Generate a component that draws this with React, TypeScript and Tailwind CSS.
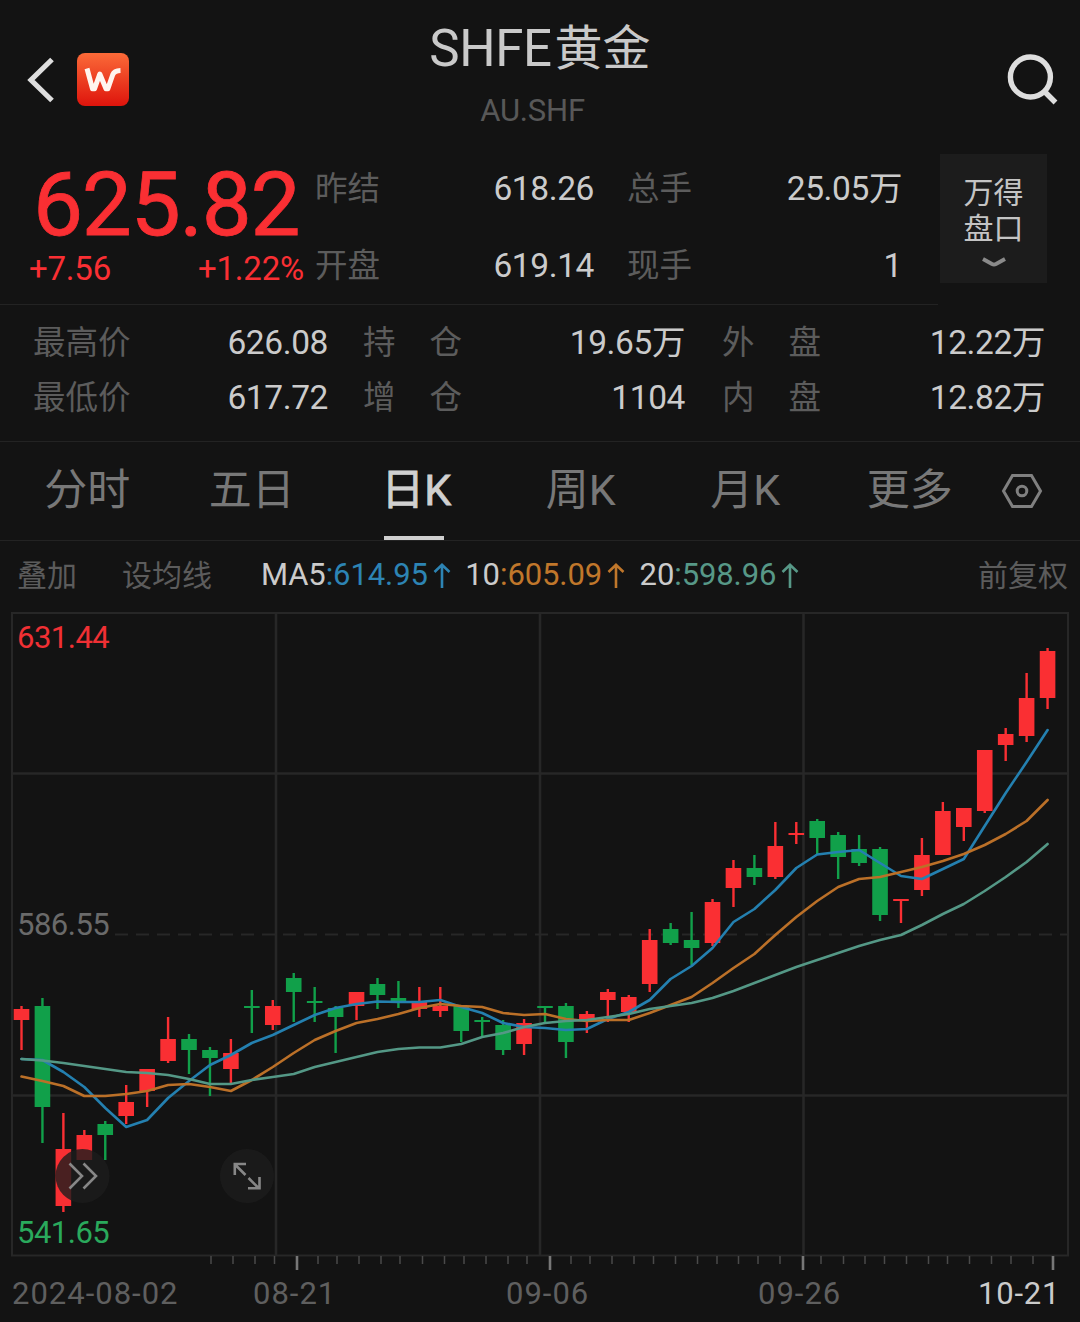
import clsx from 'clsx';

type Candle = [top: number, bottom: number, high: number, low: number, up: 0 | 1];

// y pixel coordinates inside the chart: body top, body bottom, wick top, wick bottom, up/down
const candles: Candle[] = [
  [1009, 1020, 1006, 1050, 1], [1006, 1107, 998, 1143, 0], [1149, 1206, 1113, 1212, 1],
  [1135, 1160, 1130, 1160, 1], [1124, 1135, 1121, 1160, 0], [1102, 1116, 1085, 1124, 1],
  [1069, 1091, 1069, 1107, 1], [1039, 1061, 1017, 1063, 1], [1039, 1050, 1034, 1074, 0],
  [1050, 1058, 1047, 1096, 0], [1053, 1069, 1039, 1084, 1], [1006, 1008, 990, 1033, 0],
  [1006, 1025, 1000, 1030, 1], [978, 992, 973, 1022, 0], [1001, 1003, 987, 1022, 0],
  [1008, 1017, 1006, 1053, 0], [992, 1006, 992, 1020, 1], [984, 995, 978, 1009, 0],
  [998, 1001, 981, 1008, 0], [1001, 1009, 987, 1017, 1], [1006, 1011, 987, 1017, 1],
  [1006, 1031, 1006, 1042, 0], [1020, 1022, 1017, 1037, 0], [1025, 1050, 1020, 1055, 0],
  [1023, 1044, 1019, 1055, 1], [1006, 1008, 1006, 1024, 0], [1006, 1042, 1003, 1058, 0],
  [1014, 1021, 1011, 1033, 1], [992, 1000, 989, 1022, 1], [997, 1012, 995, 1022, 1],
  [940, 984, 929, 992, 1], [929, 943, 923, 945, 0], [940, 948, 912, 965, 0],
  [902, 943, 899, 946, 1], [868, 888, 860, 907, 1], [868, 877, 855, 885, 0],
  [846, 877, 822, 879, 1], [833, 835, 822, 844, 1], [821, 838, 819, 854, 0],
  [835, 857, 832, 879, 0], [849, 863, 835, 866, 0], [849, 915, 847, 921, 0],
  [899, 901, 899, 923, 1], [855, 890, 838, 896, 1], [811, 855, 802, 855, 1],
  [808, 827, 808, 841, 1], [750, 811, 750, 813, 1], [734, 745, 728, 761, 1],
  [698, 736, 673, 742, 1], [651, 698, 648, 709, 1],
];

const ma5 = [
  1059, 1060, 1072, 1087, 1108, 1127, 1120, 1098, 1081, 1065, 1055, 1043, 1035, 1025, 1015, 1008, 1004,
  1001.5, 1002, 1002, 1000, 1007, 1013, 1023, 1027, 1028, 1030, 1029, 1019, 1012, 1000, 979, 966, 948,
  922, 909, 890, 868, 854.5, 852, 850, 863, 876, 879, 869, 859, 826, 793, 762, 730,
];
const ma10 = [
  1076.5, 1081, 1086, 1096, 1096, 1094, 1091, 1085, 1084, 1087, 1091, 1080, 1067, 1053, 1040, 1031, 1023,
  1019, 1014, 1008, 1004, 1006, 1007, 1013, 1015, 1014, 1019, 1021, 1020, 1020, 1013, 1005, 997, 983,
  968, 954, 935, 917, 901, 887, 879, 877, 872, 867, 861, 854, 845, 834, 821, 800,
];
const ma20 = [
  1059, 1060.5, 1063, 1066, 1069, 1072, 1073, 1075, 1079, 1084, 1084, 1080, 1077, 1074, 1067, 1062, 1057,
  1052, 1049, 1047.5, 1047.5, 1044, 1037, 1033, 1027, 1023, 1021, 1020, 1017, 1014, 1009, 1006, 1003, 998,
  991, 983, 975, 967, 960, 953, 946, 940, 935, 925, 914, 904, 891, 877, 862, 844,
];

const ticks = [
  211, 233, 255, 274.5, 318, 337, 359, 381, 400, 422.5, 444.5, 464, 486, 508, 527, 571, 590, 612, 634,
  653.5, 675.5, 697.5, 717, 738.5, 758, 780, 821, 843.5, 865, 884.5, 906.5, 928.5, 947.5, 969.5, 991.5,
  1011, 1033,
];
const majorTicks = [297, 550, 803, 1053];

const xAt = (i: number) => 21.5 + i * 20.94;
const toPoints = (ys: number[]) => ys.map((y, i) => `${xAt(i).toFixed(1)},${y}`).join(' ');

function Header() {
  return (
    <header className="flex h-[148px] items-start justify-between">
      <div className="flex w-[320px] items-center pt-[53px] pl-[27px]">
        <svg width="28" height="53" viewBox="0 0 28 53" fill="none" stroke="#dedede" strokeWidth="5.2">
          <path d="M25 6.5 L4 27 L25 47.5" />
        </svg>
        <svg className="ml-[22px]" width="52" height="53" viewBox="0 0 52 53">
          <defs>
            <linearGradient id="logo" x1="0" y1="0" x2="0" y2="1">
              <stop offset="0" stopColor="#fb6a38" />
              <stop offset="1" stopColor="#de140c" />
            </linearGradient>
          </defs>
          <rect width="52" height="53" rx="8" fill="url(#logo)" />
          <path
            d="M10 15.5 L15.5 35.8 H17.5 L22.8 21 L29 35.8 H30.8 L35.8 21.5 Q37.3 17.6 43.5 17.4"
            fill="none"
            stroke="#fff5ee"
            strokeWidth="5"
            strokeLinejoin="round"
          />
        </svg>
      </div>
      <div className="flex flex-col items-center pt-[19px]">
        <h1 className="flex h-[60px] items-center text-[#c9c9c9]">
          <span className="mr-[3px] text-[51px] tracking-[-0.4px]">SHFE</span>
          <span className="text-[48px]">黄金</span>
        </h1>
        <p className="mt-[14px] mr-[15px] text-[31px] leading-9 tracking-[-0.2px] text-[#585858]">AU.SHF</p>
      </div>
      <div className="flex w-[320px] justify-end pt-[53px] pr-[20px]">
        <svg width="54" height="54" viewBox="0 0 54 54" fill="none" stroke="#dedede" strokeWidth="5.4">
          <circle cx="24.4" cy="24" r="20" />
          <path d="M37.5 37.5 L49.5 49.5" />
        </svg>
      </div>
    </header>
  );
}

function Stat({ label, value, spaced, className }: { label: string; value: string; spaced?: boolean; className?: string }) {
  return (
    <div className={clsx('flex items-center justify-between', className)}>
      <span className={clsx('flex text-[32.5px] text-[#5c5c5c]', spaced && 'gap-[34px]')}>
        {spaced ? label.split('').map((c) => <span key={c}>{c}</span>) : label}
      </span>
      <span className="text-[33.5px] tracking-[-0.4px] text-[#cbcbcb]">{value}</span>
    </div>
  );
}

function Quote() {
  return (
    <section className="flex h-[156px]">
      <div className="w-[315px] text-[#fa2f33]">
        <div className="mt-[12px] pl-[33px] text-[89px] leading-[90px] tracking-[-1.2px] [-webkit-text-stroke:0.8px_#fa2f33]">
          625.82
        </div>
        <div className="flex justify-between pt-[1px] pr-[11px] pl-[29px] text-[33px] leading-[36px] tracking-[-0.2px]">
          <span>+7.56</span>
          <span>+1.22%</span>
        </div>
      </div>
      <div className="grid h-[154px] w-[588px] grid-cols-[279px_275px] grid-rows-2 gap-x-[33px]">
        <Stat label="昨结" value="618.26" className="h-[83px]" />
        <Stat label="总手" value="25.05万" className="h-[83px]" />
        <Stat label="开盘" value="619.14" className="h-[83px]" />
        <Stat label="现手" value="1" className="h-[83px]" />
      </div>
      <button className="mt-[6px] ml-[37px] flex h-[129px] w-[107px] flex-col items-center bg-[#1c1c1c] pt-[21px] text-[30px] leading-[36px] text-[#c4c4c4]">
        <span>万得</span>
        <span>盘口</span>
        <svg className="mt-[9px]" width="26" height="14" viewBox="0 0 26 14" fill="none" stroke="#8a8a8a" strokeWidth="3.8">
          <path d="M2 3 L11 8 Q13 9 15 8 L24 3" />
        </svg>
      </button>
    </section>
  );
}

function Details() {
  return (
    <section className="h-[136px] pt-[11px] pr-[34px] pl-[33px]">
      <div className="grid grid-cols-[295px_322px_323px] grid-rows-[55px_55px] gap-x-[36px]">
        <Stat label="最高价" value="626.08" />
        <Stat label="持仓" value="19.65万" spaced className="-ml-[1px] mr-[1px]" />
        <Stat label="外盘" value="12.22万" spaced />
        <Stat label="最低价" value="617.72" />
        <Stat label="增仓" value="1104" spaced className="-ml-[1px] mr-[1px]" />
        <Stat label="内盘" value="12.82万" spaced />
      </div>
    </section>
  );
}

function Tabs() {
  return (
    <nav className="flex h-[100px] items-stretch border-t border-b border-[#232323] pl-[5px] text-[43px] text-[#787878]">
      {['分时', '五日', '日K', '周K', '月K', '更多'].map((tab) => (
        <button
          key={tab}
          className={clsx(
            'relative flex w-[164.5px] items-center justify-center pb-[1px]',
            tab === '日K' && 'text-[#d0d0d0] [-webkit-text-stroke:0.8px_#d0d0d0]',
          )}
        >
          {tab}
          {tab === '日K' && <span className="absolute bottom-0 left-[50px] h-1 w-[60px] bg-[#cfcfcf]" />}
        </button>
      ))}
      <svg className="mt-[29px] ml-[9px]" width="42" height="40" viewBox="0 0 42 40" fill="none" stroke="#808080" strokeWidth="3">
        <path d="M11.5 4.5 H30.5 L39.5 20 L30.5 35.5 H11.5 L2.5 20 Z" />
        <circle cx="21" cy="20" r="4.8" />
      </svg>
    </nav>
  );
}

function Average({ name, value, className }: { name: string; value: string; className: string }) {
  return (
    <div className={clsx('flex items-center', className)}>
      <span className="text-[#cbcbcb]">{name}</span>
      <span>:{value}</span>
      <svg className="ml-[5px]" width="18" height="26" viewBox="0 0 18 26" fill="none" stroke="currentColor" strokeWidth="2.6">
        <path d="M9 25 V2 M1.5 9 L9 1.8 L16.5 9" />
      </svg>
    </div>
  );
}

function Averages() {
  return (
    <div className="flex h-[70px] items-center pr-[12px] pb-[1px] pl-[17px] text-[30px] text-[#5c5c5c]">
      <span className="w-[105px]">叠加</span>
      <span className="w-[139px]">设均线</span>
      <div className="flex gap-[14.5px] text-[31px] tracking-[-0.1px]">
        <Average name="MA5" value="614.95" className="text-[#2d84b4]" />
        <Average name="10" value="605.09" className="text-[#c0772b]" />
        <Average name="20" value="598.96" className="text-[#579887]" />
      </div>
      <span className="ml-auto">前复权</span>
    </div>
  );
}

function Chart() {
  return (
    <section className="relative h-[662px]">
      <svg className="block" width="1080" height="662" viewBox="0 611 1080 662" fill="none">
        <g stroke="#272727" strokeWidth="2">
          <rect x="12" y="613" width="1056" height="642.5" />
          <path d="M276 613 V1255 M540 613 V1255 M803.5 613 V1255 M12 773.5 H1068 M12 1095.5 H1068" strokeWidth="2.6" />
          <path d="M115 934.5 H1068" strokeDasharray="13 8" />
        </g>
        <g stroke="#4a4a4a" strokeWidth="1.5">
          {ticks.map((x) => (
            <path key={x} d={`M${x} 1256 V1264`} />
          ))}
        </g>
        <g stroke="#777777" strokeWidth="2.6">
          {majorTicks.map((x) => (
            <path key={x} d={`M${x} 1256 V1270`} />
          ))}
        </g>
        {candles.map(([top, bottom, high, low, up], i) => (
          <g key={i} fill={up ? '#fa2f33' : '#11a04a'}>
            <rect x={xAt(i) - 1.2} y={high} width="2.4" height={low - high} />
            <rect x={xAt(i) - 7.8} y={top} width="15.6" height={bottom - top} />
          </g>
        ))}
        <g strokeWidth="2.6" strokeLinejoin="round" strokeLinecap="round">
          <polyline points={toPoints(ma5)} stroke="#2480b0" />
          <polyline points={toPoints(ma10)} stroke="#bb7028" />
          <polyline points={toPoints(ma20)} stroke="#549886" />
        </g>
        <circle cx="82.5" cy="1176" r="27" fill="#1d1d1d" fillOpacity="0.8" />
        <path d="M69.5 1163.5 L82 1176 L69.5 1188.5 M83.5 1163.5 L96 1176 L83.5 1188.5" stroke="#878787" strokeWidth="2.6" />
        <circle cx="247" cy="1176" r="27" fill="#1d1d1d" fillOpacity="0.8" />
        <path
          d="M245.5 1175 L235.5 1165 M246 1164 H234.8 V1175 M248.5 1178 L258.5 1188 M248 1188.3 H259.5 V1177"
          stroke="#878787"
          strokeWidth="2.6"
        />
      </svg>
      <span className="absolute top-[9px] left-[17px] text-[31px] leading-9 tracking-[-0.5px] text-[#f03034]">631.44</span>
      <span className="absolute top-[296px] left-[17px] text-[31px] leading-9 tracking-[-0.5px] text-[#6a6a6a]">586.55</span>
      <span className="absolute top-[604px] left-[17px] text-[31px] leading-9 tracking-[-0.5px] text-[#2aa95c]">541.65</span>
    </section>
  );
}

function Dates() {
  return (
    <div className="flex h-[49px] pt-[3px] pl-[12px] text-[31px] leading-9 tracking-[1px] text-[#5f5f5f]">
      <span className="w-[241px]">2024-08-02</span>
      <span className="w-[253px]">08-21</span>
      <span className="w-[252px]">09-06</span>
      <span className="w-[220px]">09-26</span>
      <span className="tracking-[0.8px] text-[#cbcbcb]">10-21</span>
    </div>
  );
}

export default function App() {
  return (
    <div className="h-[1322px] w-[1080px] overflow-hidden bg-[#131313] font-['Roboto','Noto_Sans_CJK_SC',sans-serif]">
      <Header />
      <Quote />
      <div className="h-px w-[938px] bg-[#232323]" />
      <Details />
      <Tabs />
      <Averages />
      <Chart />
      <Dates />
    </div>
  );
}
